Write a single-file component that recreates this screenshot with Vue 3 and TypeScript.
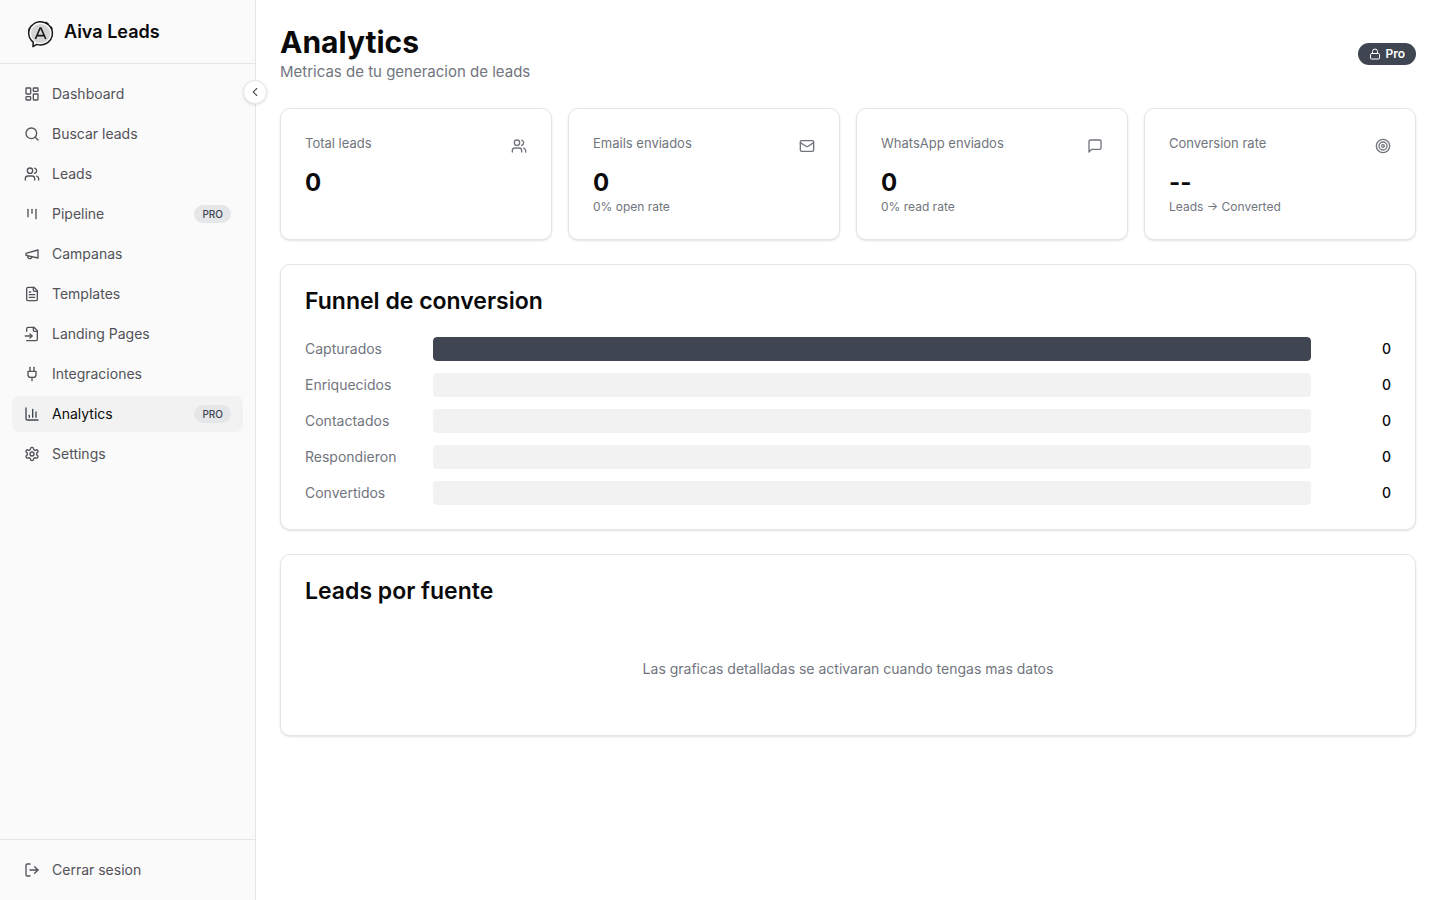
<script setup lang="ts">
interface NavItem {
  label: string
  icon: string
  pro?: boolean
  active?: boolean
}
interface Stat {
  label: string
  value: string
  note?: string
  icon: string
}
interface Stage {
  label: string
  count: number
  percent: number
}

const icons: Record<string, string> = {
  users:
    '<path d="M16 21v-2a4 4 0 0 0-4-4H6a4 4 0 0 0-4 4v2"/><circle cx="9" cy="7" r="4"/><path d="M22 21v-2a4 4 0 0 0-3-3.87"/><path d="M16 3.13a4 4 0 0 1 0 7.75"/>',
  dashboard:
    '<rect width="7" height="9" x="3" y="3" rx="1"/><rect width="7" height="5" x="14" y="3" rx="1"/><rect width="7" height="9" x="14" y="12" rx="1"/><rect width="7" height="5" x="3" y="16" rx="1"/>',
  search: '<circle cx="11" cy="11" r="8"/><path d="m21 21-4.3-4.3"/>',
  kanban: '<path d="M6 5v11"/><path d="M12 5v6"/><path d="M18 5v14"/>',
  megaphone: '<path d="m3 11 18-5v12L3 14v-3z"/><path d="M11.6 16.8a3 3 0 1 1-5.8-1.6"/>',
  fileText:
    '<path d="M15 2H6a2 2 0 0 0-2 2v16a2 2 0 0 0 2 2h12a2 2 0 0 0 2-2V7Z"/><path d="M14 2v4a2 2 0 0 0 2 2h4"/><path d="M10 9H8"/><path d="M16 13H8"/><path d="M16 17H8"/>',
  fileInput:
    '<path d="M4 22h14a2 2 0 0 0 2-2V7l-5-5H6a2 2 0 0 0-2 2v4"/><path d="M14 2v4a2 2 0 0 0 2 2h4"/><path d="M2 15h10"/><path d="m9 18 3-3-3-3"/>',
  plug: '<path d="M12 22v-5"/><path d="M9 8V2"/><path d="M15 8V2"/><path d="M18 8v5a4 4 0 0 1-4 4h-4a4 4 0 0 1-4-4V8Z"/>',
  chart: '<path d="M3 3v16a2 2 0 0 0 2 2h16"/><path d="M18 17V9"/><path d="M13 17V5"/><path d="M8 17v-3"/>',
  settings:
    '<path d="M12.22 2h-.44a2 2 0 0 0-2 2v.18a2 2 0 0 1-1 1.73l-.43.25a2 2 0 0 1-2 0l-.15-.08a2 2 0 0 0-2.73.73l-.22.38a2 2 0 0 0 .73 2.73l.15.1a2 2 0 0 1 1 1.72v.51a2 2 0 0 1-1 1.74l-.15.09a2 2 0 0 0-.73 2.73l.22.38a2 2 0 0 0 2.73.73l.15-.08a2 2 0 0 1 2 0l.43.25a2 2 0 0 1 1 1.73V20a2 2 0 0 0 2 2h.44a2 2 0 0 0 2-2v-.18a2 2 0 0 1 1-1.73l.43-.25a2 2 0 0 1 2 0l.15.08a2 2 0 0 0 2.73-.73l.22-.39a2 2 0 0 0-.73-2.73l-.15-.08a2 2 0 0 1-1-1.74v-.5a2 2 0 0 1 1-1.74l.15-.09a2 2 0 0 0 .73-2.73l-.22-.38a2 2 0 0 0-2.73-.73l-.15.08a2 2 0 0 1-2 0l-.43-.25a2 2 0 0 1-1-1.73V4a2 2 0 0 0-2-2z"/><circle cx="12" cy="12" r="3"/>',
  logout: '<path d="M9 21H5a2 2 0 0 1-2-2V5a2 2 0 0 1 2-2h4"/><path d="m16 17 5-5-5-5"/><path d="M21 12H9"/>',
  mail: '<rect width="20" height="16" x="2" y="4" rx="2"/><path d="m22 7-8.97 5.7a1.94 1.94 0 0 1-2.06 0L2 7"/>',
  message: '<path d="M21 15a2 2 0 0 1-2 2H7l-4 4V5a2 2 0 0 1 2-2h14a2 2 0 0 1 2 2z"/>',
  target: '<circle cx="12" cy="12" r="10"/><circle cx="12" cy="12" r="6"/><circle cx="12" cy="12" r="2"/>',
  lock: '<rect width="18" height="11" x="3" y="11" rx="2"/><path d="M7 11V7a5 5 0 0 1 10 0v4"/>',
  chevron: '<path d="m15 18-6-6 6-6"/>',
}

const nav: NavItem[] = [
  { label: 'Dashboard', icon: 'dashboard' },
  { label: 'Buscar leads', icon: 'search' },
  { label: 'Leads', icon: 'users' },
  { label: 'Pipeline', icon: 'kanban', pro: true },
  { label: 'Campanas', icon: 'megaphone' },
  { label: 'Templates', icon: 'fileText' },
  { label: 'Landing Pages', icon: 'fileInput' },
  { label: 'Integraciones', icon: 'plug' },
  { label: 'Analytics', icon: 'chart', pro: true, active: true },
  { label: 'Settings', icon: 'settings' },
]

const stats: Stat[] = [
  { label: 'Total leads', value: '0', icon: 'users' },
  { label: 'Emails enviados', value: '0', note: '0% open rate', icon: 'mail' },
  { label: 'WhatsApp enviados', value: '0', note: '0% read rate', icon: 'message' },
  { label: 'Conversion rate', value: '--', note: 'Leads → Converted', icon: 'target' },
]

const stages: Stage[] = [
  { label: 'Capturados', count: 0, percent: 100 },
  { label: 'Enriquecidos', count: 0, percent: 0 },
  { label: 'Contactados', count: 0, percent: 0 },
  { label: 'Respondieron', count: 0, percent: 0 },
  { label: 'Convertidos', count: 0, percent: 0 },
]
</script>

<template>
  <div class="layout">
    <aside class="sidebar">
      <div class="brand">
        <svg class="logo" viewBox="0 0 32 32" aria-hidden="true">
          <circle cx="16.5" cy="17.5" r="9.6" fill="#d6d3d4" />
          <path
            d="M9.2 26.2C3.4 21.6 3.2 13 8.6 8.8C12.4 5.4 18 4.8 22.4 7.4C27 9.8 29.4 15 28.2 19.8C27 25.6 21.6 29.4 16 29C14.6 29 13.6 28.6 12.6 28.4L9 30.6Z"
            fill="none"
            stroke="#17171c"
            stroke-width="1.5"
            stroke-linejoin="round"
          />
          <path d="M21.6 6.2 24.4 8.2M26.8 10.6 28.2 13.4M5 14.6 5.6 12" fill="none" stroke="#17171c" stroke-width="1.6" />
          <path d="M11.4 23 16.1 12h.8L21.8 23M13 19.6h7.2" fill="none" stroke="#17171c" stroke-width="1.6" />
        </svg>
        <span class="brand-name">Aiva Leads</span>
      </div>

      <nav class="nav">
        <a v-for="item in nav" :key="item.label" href="#" class="nav-item" :class="{ active: item.active }">
          <svg class="icon" viewBox="0 0 24 24" aria-hidden="true" v-html="icons[item.icon]"></svg>
          <span class="nav-label">{{ item.label }}</span>
          <span v-if="item.pro" class="tag">PRO</span>
        </a>
      </nav>

      <div class="sidebar-footer">
        <button type="button" class="nav-item">
          <svg class="icon" viewBox="0 0 24 24" aria-hidden="true" v-html="icons.logout"></svg>
          <span class="nav-label">Cerrar sesion</span>
        </button>
      </div>

      <button type="button" class="collapse" aria-label="Contraer menu">
        <svg class="icon icon-md" viewBox="0 0 24 24" aria-hidden="true" v-html="icons.chevron"></svg>
      </button>
    </aside>

    <main class="main">
      <header class="page-header">
        <div>
          <h1>Analytics</h1>
          <p class="subtitle">Metricas de tu generacion de leads</p>
        </div>
        <span class="plan">
          <svg class="icon icon-sm" viewBox="0 0 24 24" aria-hidden="true" v-html="icons.lock"></svg>
          Pro
        </span>
      </header>

      <section class="stats">
        <article v-for="stat in stats" :key="stat.label" class="card">
          <div class="stat-head">
            <h2 class="stat-label">{{ stat.label }}</h2>
            <svg class="icon" viewBox="0 0 24 24" aria-hidden="true" v-html="icons[stat.icon]"></svg>
          </div>
          <div class="stat-value">{{ stat.value }}</div>
          <p v-if="stat.note" class="stat-note">{{ stat.note }}</p>
        </article>
      </section>

      <section class="card">
        <h2 class="card-title">Funnel de conversion</h2>
        <div class="stages">
          <div v-for="stage in stages" :key="stage.label" class="stage">
            <span class="stage-label">{{ stage.label }}</span>
            <div class="track">
              <div class="fill" :style="{ width: stage.percent + '%' }"></div>
            </div>
            <span class="stage-count">{{ stage.count }}</span>
          </div>
        </div>
      </section>

      <section class="card">
        <h2 class="card-title">Leads por fuente</h2>
        <p class="empty">Las graficas detalladas se activaran cuando tengas mas datos</p>
      </section>
    </main>
  </div>
</template>

<style>
body {
  margin: 0;
  background: #fff;
}
</style>

<style scoped>
.layout,
.layout * {
  box-sizing: border-box;
}
.layout {
  display: flex;
  min-height: 100vh;
  font-family: Inter, 'Liberation Sans', sans-serif;
  font-size: 14px;
  line-height: 20px;
  color: #0a0a0a;
}
h1,
h2,
p {
  margin: 0;
}
.icon {
  width: 16px;
  height: 16px;
  flex-shrink: 0;
  fill: none;
  stroke: currentColor;
  stroke-width: 2;
  stroke-linecap: round;
  stroke-linejoin: round;
}
.icon-sm {
  width: 12px;
  height: 12px;
}
.icon-md {
  width: 14px;
  height: 14px;
}

.sidebar {
  position: sticky;
  top: 0;
  display: flex;
  flex-direction: column;
  flex-shrink: 0;
  width: 256px;
  height: 100vh;
  background: #fafafa;
  border-right: 1px solid #e5e5e5;
}
.brand {
  display: flex;
  align-items: center;
  gap: 8px;
  height: 64px;
  padding: 0 24px;
  border-bottom: 1px solid #e5e5e5;
}
.logo {
  width: 32px;
  height: 32px;
}
.brand-name {
  font-size: 18px;
  line-height: 28px;
  font-weight: 600;
}
.nav {
  display: flex;
  flex: 1;
  flex-direction: column;
  gap: 4px;
  padding: 12px;
}
.nav-item {
  display: flex;
  align-items: center;
  gap: 12px;
  width: 100%;
  height: 36px;
  padding: 0 12px;
  border: 0;
  border-radius: 8px;
  background: none;
  color: #525258;
  font: inherit;
  text-align: left;
  text-decoration: none;
  cursor: pointer;
}
.nav-item.active {
  background: #f2f2f2;
  color: #0a0a0a;
}
.nav-item.active .icon {
  color: #3f4651;
}
.nav-label {
  flex: 1;
}
.tag {
  padding: 0 8px;
  border-radius: 9px;
  background: #e5e6e8;
  color: #3f4651;
  font-size: 10px;
  line-height: 18px;
  font-weight: 500;
}
.sidebar-footer {
  padding: 12px;
  border-top: 1px solid #e5e5e5;
}
.collapse {
  position: absolute;
  top: 80px;
  right: -12px;
  display: flex;
  align-items: center;
  justify-content: center;
  width: 24px;
  height: 24px;
  padding: 0;
  border: 1px solid #e5e5e5;
  border-radius: 50%;
  background: #fff;
  color: #525258;
  box-shadow: 0 1px 3px rgba(0, 0, 0, 0.12);
  cursor: pointer;
}

.main {
  display: flex;
  flex: 1;
  flex-direction: column;
  gap: 24px;
  min-width: 0;
  padding: 24px;
}
.page-header {
  display: flex;
  align-items: center;
  justify-content: space-between;
}
h1 {
  font-size: 30px;
  line-height: 36px;
  font-weight: 700;
}
.subtitle {
  color: #71757e;
  font-size: 15px;
  line-height: 24px;
}
.plan {
  display: flex;
  align-items: center;
  gap: 4px;
  height: 22px;
  padding: 0 11px;
  border-radius: 11px;
  background: #3f4651;
  color: #fff;
  font-size: 12px;
  line-height: 16px;
  font-weight: 600;
}
.card {
  padding: 24px;
  border: 1px solid #e5e5e5;
  border-radius: 10px;
  background: #fff;
  box-shadow: 0 1px 2px rgba(0, 0, 0, 0.12);
}
.stats {
  display: grid;
  grid-template-columns: repeat(4, minmax(0, 1fr));
  gap: 16px;
}
.stat-head {
  display: flex;
  justify-content: space-between;
  height: 26px;
  margin-bottom: 8px;
  color: #71757e;
}
.stat-head .icon {
  align-self: center;
}
.stat-label {
  font-size: 13px;
  line-height: 20px;
  font-weight: 400;
}
.stat-value {
  font-size: 24px;
  line-height: 32px;
  font-weight: 700;
}
.stat-note {
  color: #71757e;
  font-size: 12px;
  line-height: 16px;
}
.card-title {
  margin-bottom: 24px;
  font-size: 23px;
  line-height: 24px;
  font-weight: 600;
}
.stages {
  display: flex;
  flex-direction: column;
  gap: 12px;
}
.stage {
  display: flex;
  align-items: center;
  gap: 16px;
}
.stage-label {
  width: 112px;
  color: #71757e;
}
.track {
  flex: 1;
  height: 24px;
  overflow: hidden;
  border-radius: 4px;
  background: #f2f2f2;
}
.fill {
  height: 100%;
  border-radius: 4px;
  background: #3f4651;
}
.stage-count {
  width: 64px;
  text-align: right;
  font-weight: 500;
}
.empty {
  padding: 32px 0;
  color: #71757e;
  text-align: center;
}
</style>
